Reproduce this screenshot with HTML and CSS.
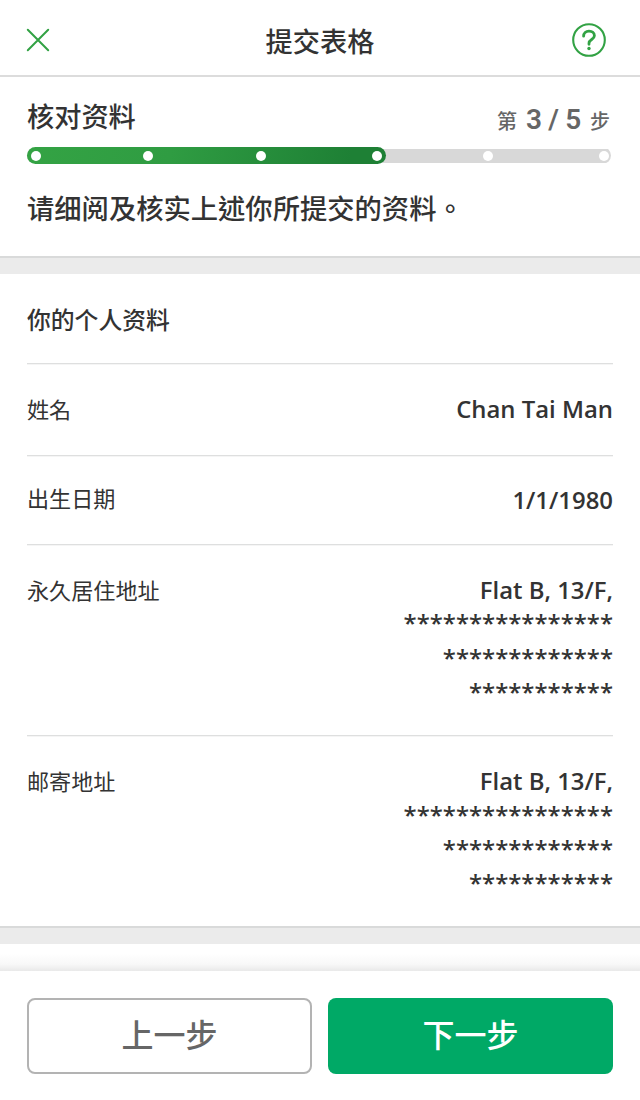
FILE: index.html
```html
<!DOCTYPE html>
<html lang="zh-Hant">
<head>
    <meta charset="UTF-8">
    <title>提交表格</title>
    <link rel="stylesheet" href="styles.css">
</head>
<body>
    <div class="header">
        <svg class="icon-close" viewBox="0 0 24 24"><path d="M1.8 1.8L22.2 22.2M22.2 1.8L1.8 22.2"/></svg>
        <h1>提交表格</h1>
        <svg class="icon-help" viewBox="0 0 34 34">
            <circle cx="17" cy="17" r="15.8"/>
            <path d="M11.6 13.2C11.6 10 13.9 8.1 17 8.1C20.1 8.1 22.4 10 22.4 12.8C22.4 16.6 17 16.4 17 20.2V21.3"/>
            <circle class="dot" cx="17" cy="25.5" r="1.7"/>
        </svg>
    </div>

    <div class="progress">
        <div class="progress-top">
            <h2>核对资料</h2>
            <div class="step">第 <span>3 / 5</span> 步</div>
        </div>
        <div class="bar">
            <div class="bar-done"><i></i><i></i><i></i><i></i></div>
            <div class="bar-rest"><i></i><i></i></div>
        </div>
        <p>请细阅及核实上述你所提交的资料。</p>
    </div>

    <div class="divider"></div>

    <div class="details">
        <h3>你的个人资料</h3>
        <div class="row row-name">
            <div class="label">姓名</div>
            <div class="value">Chan Tai Man</div>
        </div>
        <div class="row row-birth">
            <div class="label">出生日期</div>
            <div class="value">1/1/1980</div>
        </div>
        <div class="row row-address">
            <div class="label">永久居住地址</div>
            <div class="value">
                <div>Flat B, 13/F,</div>
                <div class="line-second">****************</div>
                <div>*************</div>
                <div>***********</div>
            </div>
        </div>
        <div class="row row-address">
            <div class="label">邮寄地址</div>
            <div class="value">
                <div>Flat B, 13/F,</div>
                <div>****************</div>
                <div>*************</div>
                <div>***********</div>
            </div>
        </div>
    </div>

    <div class="divider"></div>
    <div class="fade"></div>

    <div class="footer">
        <button class="btn btn-back">上一步</button>
        <button class="btn btn-next">下一步</button>
    </div>
</body>
</html>
```
FILE: styles.css
```css
* {
    box-sizing: border-box;
}
body {
    margin: 0;
    width: 640px;
    height: 1100px;
    overflow: hidden;
    background: #fff;
    color: #333;
    font-family: "Noto Sans CJK TC", sans-serif;
}
h1, h2, h3, p {
    margin: 0;
    font-weight: 500;
}
.header {
    display: flex;
    align-items: center;
    justify-content: space-between;
    height: 77px;
    padding: 4px 34px 0 26px;
    border-bottom: 2px solid #dcdcdc;
}
.header h1 {
    font-size: 27.2px;
    line-height: 40px;
    padding-left: 18px;
}
.icon-close {
    width: 24px;
    height: 24px;
    fill: none;
    stroke: #32a244;
    stroke-width: 2;
    stroke-linecap: round;
}
.icon-help {
    width: 34px;
    height: 34px;
    fill: none;
    stroke: #32a244;
    stroke-width: 2.1;
    stroke-linecap: round;
}
.icon-help path {
    stroke-width: 2.8;
}
.icon-help .dot {
    fill: #32a244;
    stroke: none;
}
.progress {
    height: 179px;
    padding: 18px 29px 0 27px;
}
.progress-top {
    display: flex;
    justify-content: space-between;
    height: 52px;
}
.progress h2 {
    font-size: 27.2px;
    line-height: 40px;
}
.step {
    display: flex;
    align-items: baseline;
    gap: 9px;
    padding-right: 1px;
    font-size: 20px;
    line-height: 49px;
    font-weight: 500;
    color: #666;
}
.step span {
    font-family: Roboto, sans-serif;
    font-size: 28px;
    font-weight: 600;
    letter-spacing: -0.3px;
}
.bar {
    display: flex;
    align-items: center;
    height: 17px;
    background: linear-gradient(#d8d8d8, #d8d8d8) center / 100% 14px no-repeat;
    border-radius: 9px;
}
.bar i {
    width: 10px;
    height: 10px;
    border-radius: 50%;
    background: #fff;
}
.bar-done, .bar-rest {
    display: flex;
    align-items: center;
    justify-content: space-between;
}
.bar-done {
    width: 359px;
    height: 17px;
    padding: 0 4px;
    border-radius: 9px;
    background: linear-gradient(100deg, #34a344, #2f9c42 40%, #1e8035 90%);
}
.bar-done i:nth-child(2) {
    margin-left: -2px;
}
.bar-done i:last-child {
    margin-left: 2px;
}
.bar-rest {
    flex: 1;
    padding: 0 2px 0 97px;
}
.progress p {
    margin-top: 23px;
    font-size: 27.3px;
    line-height: 40px;
}
.divider {
    height: 18px;
    border-top: 2px solid #d9dada;
    background: #ebebeb;
}
.details {
    height: 652px;
    padding: 0 27px;
}
.details h3 {
    height: 89px;
    padding-top: 27px;
    font-size: 23.8px;
    line-height: 36px;
}
.row {
    display: flex;
    justify-content: space-between;
    border-top: 1px solid #dedfdf;
    box-shadow: inset 0 1px #f5f5f5;
}
.row-name {
    height: 92px;
}
.row-birth {
    height: 89px;
}
.row-address {
    height: 191px;
}
.label {
    padding-top: 27px;
    font-size: 22.1px;
    line-height: 34px;
}
.row-birth .label {
    padding-top: 24px;
}
.value {
    padding-top: 28px;
    font-family: "Open Sans", sans-serif;
    font-size: 23.9px;
    font-weight: 560;
    line-height: 34px;
    text-align: right;
}
.row-birth .value {
    padding-top: 27px;
}
.line-second {
    margin-top: -1px;
    height: 35px;
}
.fade {
    height: 27px;
    background: linear-gradient(#fff 35%, #f8f8f8 75%, #e9e9e9);
}
.footer {
    display: grid;
    grid-template-columns: 1fr 1fr;
    gap: 16px;
    height: 129px;
    padding: 27px 27px 0;
    background: #fff;
}
.btn {
    height: 76px;
    padding: 0 0 7px;
    border-radius: 8px;
    font-family: inherit;
    font-size: 32px;
    font-weight: 500;
}
.btn-back {
    border: 2px solid #b3b3b3;
    background: #fff;
    color: #666;
}
.btn-next {
    border: 0;
    background: #00a966;
    color: #fff;
}
```
